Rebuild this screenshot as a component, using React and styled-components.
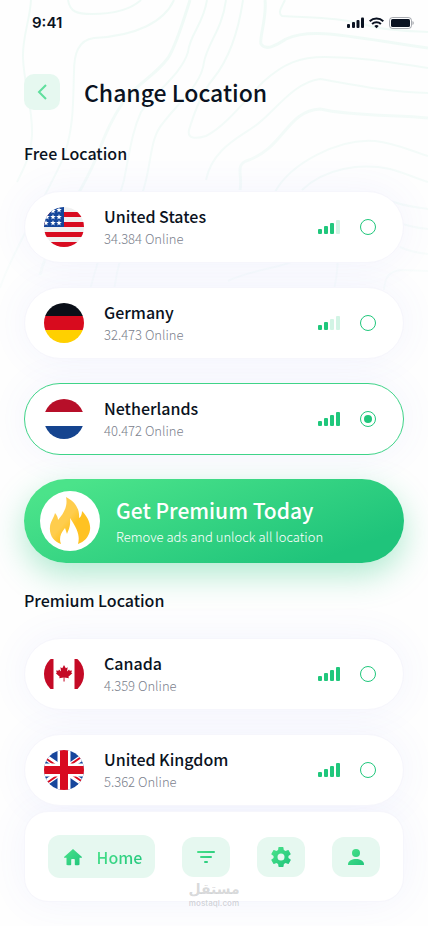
import React, { useId, useState } from "react"
import styled, { createGlobalStyle, css } from "styled-components"

const green = "#20c77c"
const mint = "#e6f8f0"
const ink = "#0a1221"

const locations = {
  free: [
    { id: "us", name: "United States", online: "34.384", signal: 3 },
    { id: "de", name: "Germany", online: "32.473", signal: 2 },
    { id: "nl", name: "Netherlands", online: "40.472", signal: 4 },
  ],
  premium: [
    { id: "ca", name: "Canada", online: "4.359", signal: 4 },
    { id: "uk", name: "United Kingdom", online: "5.362", signal: 4 },
  ],
}

const GlobalStyle = createGlobalStyle`
  * {
    box-sizing: border-box;
  }

  body {
    margin: 0;
    background: #fefefe;
    color: ${ink};
    font-family: "Noto Sans CJK SC", "Noto Sans", sans-serif;
  }
`

const Page = styled.div`
  position: relative;
  isolation: isolate;
  overflow: hidden;
  min-height: 100vh;
  padding: 0 24px 24px;
`

const Contours = styled.svg`
  position: absolute;
  z-index: -2;
  top: 0;
  right: 0;
  width: 428px;
  height: 420px;
  fill: none;
  stroke-width: 2;
`

const StatusBar = styled.div`
  display: flex;
  align-items: center;
  justify-content: space-between;
  height: 46px;
  padding-left: 8px;
  margin-right: -13px;
`

const Clock = styled.time`
  font: 600 15px/20px Inter, sans-serif;
`

const StatusIcons = styled.svg`
  width: 70px;
  height: 14px;
`

const Header = styled.header`
  display: flex;
  align-items: center;
  gap: 24px;
  margin-top: 28px;
`

const BackButton = styled.button`
  display: grid;
  place-items: center;
  width: 36px;
  height: 36px;
  padding: 0;
  border: 0;
  border-radius: 10px;
  background: ${mint};
`

const Title = styled.h1`
  margin: 0;
  font-size: 23px;
  font-weight: 500;
  line-height: 36px;
`

const Section = styled.section`
  margin-top: ${p => p.$top}px;
`

const Heading = styled.h2`
  margin: 0 0 26px;
  font-size: 16px;
  font-weight: 500;
  line-height: 24px;
`

const List = styled.div`
  display: grid;
  gap: 24px;
`

const softShadow = css`
  position: relative;

  &::before {
    content: "";
    position: absolute;
    z-index: -1;
    inset: 0;
    border-radius: inherit;
    box-shadow: 0 0 40px rgba(90, 100, 240, 0.07);
  }
`

const Row = styled.label`
  ${softShadow}
  display: flex;
  align-items: center;
  height: 72px;
  padding: 0 27px 0 19px;
  border: 1px solid ${p => (p.$selected ? "#3fd488" : "#f6f6fc")};
  border-radius: 36px;
  background: #fff;
  cursor: pointer;
`

const FlagImage = styled.svg`
  flex: none;
  width: 40px;
  height: 40px;
`

const RowText = styled.div`
  flex: 1;
  margin-left: 20px;
`

const Name = styled.div`
  font-size: 16px;
  font-weight: 500;
  line-height: 24px;
`

const Online = styled.div`
  color: #7b818d;
  font-size: 13px;
  font-weight: 300;
  line-height: 22px;
`

const Bars = styled.div`
  display: flex;
  align-items: flex-end;
  gap: 2px;
  height: 14px;
  margin-right: 20px;
`

const Bar = styled.span`
  width: 4px;
  height: ${p => p.$height}px;
  border-radius: 1px;
  background: ${p => (p.$on ? green : "#d2f4e5")};
`

const Radio = styled.input`
  appearance: none;
  width: 16px;
  height: 16px;
  margin: 0;
  border: 1px solid ${green};
  border-radius: 50%;

  &:checked {
    padding: 3px;
    background: ${green} content-box;
  }
`

const Banner = styled.button`
  display: flex;
  align-items: center;
  gap: 16px;
  width: 100%;
  height: 84px;
  margin-top: 24px;
  padding: 0 16px;
  border: 0;
  border-radius: 42px;
  background: linear-gradient(160deg, #4be38a 10%, #1fc47b 85%);
  box-shadow: 0 12px 32px rgba(32, 199, 124, 0.35);
  color: #fff;
  font-family: inherit;
  text-align: left;
`

const Flame = styled.span`
  display: grid;
  place-items: center;
  width: 60px;
  height: 60px;
  border-radius: 50%;
  background: #fff;
`

const BannerTitle = styled.span`
  display: block;
  font-size: 21px;
  font-weight: 500;
  line-height: 32px;
`

const BannerText = styled.span`
  display: block;
  font-size: 13px;
  font-weight: 300;
  line-height: 22px;
`

const Nav = styled.nav`
  ${softShadow}
  display: flex;
  align-items: center;
  justify-content: space-between;
  height: 91px;
  margin-top: 5px;
  padding: 0 23px;
  border: 1px solid #f6f6fc;
  border-radius: 24px;
  background: #fff;
`

const Tab = styled.a`
  display: flex;
  align-items: center;
  justify-content: center;
  gap: 12px;
  width: ${p => (p.$active ? 107 : 48)}px;
  height: ${p => (p.$active ? 43 : 40)}px;
  border-radius: 12px;
  background: ${mint};
  text-decoration: none;
`

const TabLabel = styled.span`
  background: linear-gradient(135deg, #4be38a, #1fc47b);
  background-clip: text;
  color: transparent;
  font-size: 16px;
  font-weight: 500;
  line-height: 24px;
`

const Watermark = styled.div`
  position: absolute;
  right: 0;
  bottom: 18px;
  left: 0;
  color: rgba(120, 125, 130, 0.3);
  text-align: center;
  pointer-events: none;
`

const WatermarkName = styled.div`
  font: 700 14px/18px "DejaVu Sans", sans-serif;
`

const WatermarkSite = styled.div`
  font: 600 8px/10px Inter, sans-serif;
`

const star = "M0-2.900.7-.9 2.800-.9 1.100.4 1.700 2.400 0 1.200-1.700 2.400-1.100.4-2.800-.9-.7-.9z"

const flags = {
  us: (
    <>
      <path fill="#f0f0f0" d="M0 0h40v40H0z" />
      <path fill="#d80b20" d="M0 5h40v5H0zM0 15h40v5H0zM0 25h40v5H0zM0 35h40v5H0z" />
      <path fill="#14459a" d="M0 0h20v20H0z" />
      {[[15, 3], [9, 4], [15, 10], [9, 10], [3, 10], [15, 16], [9, 16], [2, 16]].map(([x, y]) => (
        <path key={`${x}-${y}`} fill="#fff" transform={`translate(${x} ${y})`} d={star} />
      ))}
    </>
  ),
  de: (
    <>
      <path fill="#0a0f18" d="M0 0h40v13H0z" />
      <path fill="#d80b1e" d="M0 13h40v14H0z" />
      <path fill="#ffd000" d="M0 27h40v13H0z" />
    </>
  ),
  nl: (
    <>
      <path fill="#b70f29" d="M0 0h40v13H0z" />
      <path fill="#fff" d="M0 13h40v14H0z" />
      <path fill="#15448f" d="M0 27h40v13H0z" />
    </>
  ),
  ca: (
    <>
      <path fill="#c40a26" d="M0 5h9.5v30H0zM30.5 5H40v30h-9.500z" />
      <path
        fill="#c40a26"
        d="M20 11l1.800 3.200 1.900-.900-.7 4.200 2.100-2 .6 1.300 2.300-.4-.7 2.300 1 .6-3.900 3.400.5 1.500-4.400-.6.1 4h-1.100l.1-4-4.400.6.500-1.500-3.900-3.400 1-.6-.7-2.300 2.300.4.600-1.300 2.100 2-.7-4.200 1.900.900z"
      />
    </>
  ),
  uk: (
    <>
      <path fill="#17469c" d="M0 0h40v40H0z" />
      <path stroke="#fff" strokeWidth="6" d="M-6 2l52 36M46 2L-6 38" />
      <path stroke="#d80b20" strokeWidth="2" d="M-6 3l26 18M46 37L20 19M46 1L20 19M-6 39l26-18" />
      <path fill="#fff" d="M13.500 0h13v40h-13zM0 13.500h40v13H0z" />
      <path fill="#d80b20" d="M16 0h8v40h-8zM0 16h40v8H0z" />
    </>
  ),
}

const Flag = ({ country }) => {
  const clip = useId()
  return (
    <FlagImage viewBox="0 0 40 40" aria-hidden="true">
      <clipPath id={clip}>
        <circle cx="20" cy="20" r="20" />
      </clipPath>
      <g clipPath={`url(#${clip})`}>{flags[country]}</g>
    </FlagImage>
  )
}

const Signal = ({ level }) => (
  <Bars>
    {[5, 8, 11, 14].map((height, i) => (
      <Bar key={height} $height={height} $on={i < level} />
    ))}
  </Bars>
)

const LocationRow = ({ location, selected, onSelect }) => (
  <Row $selected={selected}>
    <Flag country={location.id} />
    <RowText>
      <Name>{location.name}</Name>
      <Online>{location.online} Online</Online>
    </RowText>
    <Signal level={location.signal} />
    <Radio type="radio" name="location" checked={selected} onChange={() => onSelect(location.id)} />
  </Row>
)

const NavIcon = ({ children }) => {
  const fill = useId()
  return (
    <svg width="24" height="24" viewBox="0 0 24 24" fill={`url(#${fill})`} aria-hidden="true">
      <linearGradient id={fill} gradientUnits="userSpaceOnUse" x1="3" y1="3" x2="21" y2="21">
        <stop stopColor="#4be38a" />
        <stop offset="1" stopColor="#1fc47b" />
      </linearGradient>
      {children}
    </svg>
  )
}

const Background = () => (
  <Contours viewBox="0 0 428 420" stroke="url(#contour-fade)" aria-hidden="true">
    <linearGradient id="contour-fade" gradientUnits="userSpaceOnUse" x1="0" y1="0" x2="0" y2="330">
      <stop stopColor="#effaf6" />
      <stop offset=".5" stopColor="#f4fbf9" />
      <stop offset="1" stopColor="#fbfdfd" />
    </linearGradient>
    <path d="M31 0C30 20 22 38 23 58C24 85 33 108 32 135C31 155 24 168 17 182" />
    <path d="M68 0C70 12 77 14 92 14C112 14 130 10 141 0" />
    <path d="M174 0C164 22 136 36 94 38C78 40 74 54 74 72C73 100 74 125 65 153C58 176 12 250 0 288" />
    <path strokeWidth="3" d="M190 0C183 22 176 46 168 58C154 77 136 84 124 101C110 121 104 138 96 158C84 190 50 235 40 275" />
    <path d="M207 0C203 25 190 34 188 52C181 75 155 92 141 112C132 132 130 150 124 180C116 210 100 250 90 290" />
    <path d="M226 0C222 30 208 42 204 62C202 84 178 103 163 123C151 137 152 155 146 180C138 215 120 245 114 290" />
    <path d="M243 0C239 27 230 58 213 79C202 92 195 110 189 130C187 139 196 139 206 136C226 126 247 98 263 82C284 63 300 57 325 57C365 57 395 63 428 68" />
    <path strokeWidth="3" d="M265 0C267 18 259 38 261 44C266 52 278 44 286 39C312 27 350 37 428 48" />
    <path d="M285 0C280 10 278 13 282 16C310 18 340 17 370 26C390 31 410 31 428 32" />
    <path d="M206 180C212 150 238 138 252 128C270 118 292 82 320 79C350 84 385 92 428 93" />
    <path strokeWidth="3" d="M240 190C243 176 235 166 246 161C284 149 286 111 320 109C350 116 395 115 428 118" />
    <path d="M275 192C290 164 338 138 375 141C395 143 412 151 428 156" />
    <path d="M302 190C325 168 360 163 390 169C405 173 415 178 428 182" />
    <path d="M228 281C255 267 300 268 306 250M334 290C338 270 338 262 337 250M384 290C385 278 388 271 402 270L428 271" />
    <path d="M388 200C402 206 415 207 428 209M397 222C409 227 418 228 428 229M400 247C410 252 419 253 428 254" />
  </Contours>
)

const App = () => {
  const [selected, setSelected] = useState("nl")

  const renderRows = items =>
    items.map(item => (
      <LocationRow key={item.id} location={item} selected={item.id === selected} onSelect={setSelected} />
    ))

  return (
    <Page>
      <GlobalStyle />
      <Background />

      <StatusBar>
        <Clock>9:41</Clock>
        <StatusIcons viewBox="0 0 70 14" fill={ink} aria-hidden="true">
          <rect x="0" y="8" width="3" height="4" rx="1" />
          <rect x="5" y="6" width="3" height="6" rx="1" />
          <rect x="9.500" y="4" width="3" height="8" rx="1" />
          <rect x="14" y="1.500" width="3" height="10.500" rx="1" />
          <g fill="none" stroke={ink} strokeWidth="2">
            <path d="M22.700 5.200a10 10 0 0 1 13.600 0" />
            <path d="M25.100 7.900a6.500 6.500 0 0 1 8.800 0" />
          </g>
          <path d="M29.500 12.300l-2.200-2.200a3.200 3.200 0 0 1 4.400 0z" />
          <rect x="42.500" y="1.500" width="22" height="11" rx="3" fill="none" stroke={ink} strokeOpacity=".35" />
          <rect x="44" y="3" width="19" height="8" rx="1.500" />
          <path fillOpacity=".4" d="M65.500 5c1.700.6 1.700 3.400 0 4z" />
        </StatusIcons>
      </StatusBar>

      <Header>
        <BackButton aria-label="Back">
          <svg width="24" height="24" fill="none" stroke="#5fdf9d" strokeWidth="2" aria-hidden="true">
            <path d="M16 5l-7 7 7 7" />
          </svg>
        </BackButton>
        <Title>Change Location</Title>
      </Header>

      <Section $top={31}>
        <Heading>Free Location</Heading>
        <List>{renderRows(locations.free)}</List>
      </Section>

      <Banner>
        <Flame>
          <svg width="42" height="50" viewBox="0 0 42 50" aria-hidden="true">
            <linearGradient id="flame" x1="0" y1="0" x2="1" y2="1">
              <stop offset=".45" stopColor="#ffcd4d" />
              <stop offset=".6" stopColor="#ffc222" />
            </linearGradient>
            <path
              fill="url(#flame)"
              d="M17 1C25 5 31 12 30 22C32 21 33 18 33 15C38 20 42 27 41 34C40 41 35 46 29 48C31 40 29 34 21 22C22 30 19 35 18 38L16 32C11 38 10 43 12 48C5 46 0 39 1 31C1 26 5 22 6 17C8 19 9 22 9 24C15 17 19 10 17 1Z"
            />
          </svg>
        </Flame>
        <span>
          <BannerTitle>Get Premium Today</BannerTitle>
          <BannerText>Remove ads and unlock all location</BannerText>
        </span>
      </Banner>

      <Section $top={25}>
        <Heading>Premium Location</Heading>
        <List>{renderRows(locations.premium)}</List>
      </Section>

      <Nav>
        <Tab href="#home" $active>
          <NavIcon>
            <path d="M12 4L3.300 11.700c-.5.500-.3 1 .4 1H5.500V19c0 .8.400 1.200 1.200 1.200h2.700c.5 0 .8-.3.800-.8V15c0-.6.400-1 1-1h1.600c.6 0 1 .4 1 1v4.400c0 .5.300.8.800.8h2.700c.8 0 1.200-.4 1.200-1.200v-6.300h1.800c.7 0 .9-.5.400-1z" />
          </NavIcon>
          <TabLabel>Home</TabLabel>
        </Tab>
        <Tab href="#filter" aria-label="Filter">
          <NavIcon>
            <rect x="3" y="6" width="18" height="2" rx="1" />
            <rect x="6" y="11" width="12" height="2" rx="1" />
            <rect x="10" y="16" width="4" height="2" rx="1" />
          </NavIcon>
        </Tab>
        <Tab href="#settings" aria-label="Settings">
          <NavIcon>
            <path d="M19.400 13a7.500 7.500 0 0 0 0-2l2.100-1.600c.2-.2.300-.4.100-.7l-2-3.400c-.1-.3-.4-.3-.6-.2l-2.500 1a7.300 7.300 0 0 0-1.700-1l-.4-2.600a.5.500 0 0 0-.5-.5h-4a.5.500 0 0 0-.5.500L9.100 5.100a7.600 7.600 0 0 0-1.700 1L5 5.100c-.3-.1-.5 0-.6.200l-2 3.400c-.2.300-.1.500.1.700L4.600 11a7.500 7.500 0 0 0 0 2l-2.100 1.600c-.2.200-.3.400-.1.700l2 3.400c.1.300.3.300.6.200l2.400-1a7.600 7.600 0 0 0 1.700 1l.4 2.600c0 .3.200.5.500.5h4c.3 0 .5-.2.500-.5l.4-2.600a7.300 7.300 0 0 0 1.700-1l2.500 1c.2.100.5 0 .6-.2l2-3.400c.2-.3.100-.5-.1-.7zM12 15.500a3.500 3.500 0 1 1 0-7 3.500 3.500 0 0 1 0 7z" />
          </NavIcon>
        </Tab>
        <Tab href="#profile" aria-label="Profile">
          <NavIcon>
            <circle cx="12" cy="8" r="4" />
            <path d="M4 19.500c0-4 4.500-5.500 8-5.500s8 1.500 8 5.500c0 .5-.3.500-.5.500h-15c-.3 0-.5 0-.5-.5z" />
          </NavIcon>
        </Tab>
      </Nav>

      <Watermark>
        <WatermarkName lang="ar">مستقل</WatermarkName>
        <WatermarkSite>mostaql.com</WatermarkSite>
      </Watermark>
    </Page>
  )
}

export default App
